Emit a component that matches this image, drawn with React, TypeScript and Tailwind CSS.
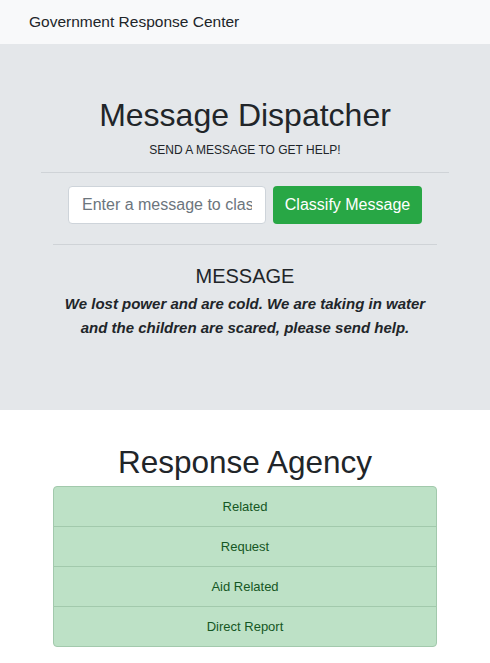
export default function App() {
  const labels = ["Related", "Request", "Aid Related", "Direct Report"];

  return (
    <div className="min-h-screen bg-white text-[#212529] font-['Liberation_Sans',Arial,sans-serif]">
      <nav className="h-[44px] bg-[#f8f9fa] flex items-center pl-[29px]">
        <span className="text-[15.5px]">Government Response Center</span>
      </nav>

      <div className="bg-[#e4e7ea] h-[366px] pt-[52px]">
        <div className="px-[41px] text-center">
          <h1 className="text-[32px] leading-[38px]">Message Dispatcher</h1>
          <p className="text-[12px] mt-[7px] leading-[18px]">SEND A MESSAGE TO GET HELP!</p>
          <hr className="mt-[13px] border-[#cfd3d7]" />
        </div>
        <div className="flex gap-[7px] mt-[13px] pl-[68px]">
          <input
            className="w-[198px] h-[38px] rounded-[4px] border border-[#ced4da] bg-white px-[13px] text-[16px] placeholder-[#6c757d] outline-none"
            placeholder="Enter a message to classify"
          />
          <button className="w-[149px] h-[38px] rounded-[4px] bg-[#28a745] text-white text-[16px]">
            Classify Message
          </button>
        </div>
        <div className="px-[53px] text-center">
          <hr className="mt-[20px] border-[#cfd3d7]" />
          <h2 className="text-[20px] mt-[19px] leading-[24px]">MESSAGE</h2>
          <p className="text-[15px] font-bold italic leading-[24px] mt-[4px]">
            We lost power and are cold. We are taking in water and the children are scared, please send help.
          </p>
        </div>
      </div>

      <div className="px-[53px] pt-[33px] text-center">
        <h1 className="text-[31.5px] leading-[38px]">Response Agency</h1>
        <ul className="mt-[5px] flex flex-col">
          {labels.map((l, i) => (
            <li
              key={l}
              className={`h-[41px] flex items-center justify-center text-[13px] text-[#155724] bg-[#bde1c6] border border-[#a2c9ac] ${
                i === 0 ? "rounded-t-[4px]" : "-mt-px"
              } ${i === labels.length - 1 ? "rounded-b-[4px]" : ""}`}
            >
              {l}
            </li>
          ))}
        </ul>
      </div>
    </div>
  );
}
